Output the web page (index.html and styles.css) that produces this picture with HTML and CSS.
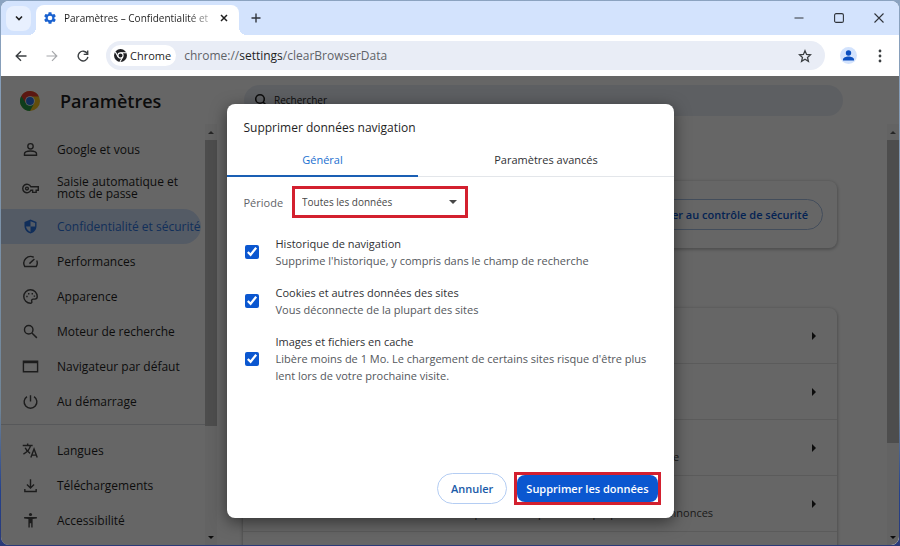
FILE: index.html
```html
<!DOCTYPE html>
<html lang="fr">
<head>
    <meta charset="UTF-8">
    <meta name="viewport" content="width=device-width, initial-scale=1.0">
    <title>Paramètres – Confidentialité et sécurité</title>
    <link rel="stylesheet" href="styles.css">
</head>
<body>
<div class="window">

    <!-- Onglets -->
    <header class="tabstrip">
        <button class="tab-search" aria-label="Rechercher dans les onglets">
            <svg width="10" height="10" viewBox="0 0 10 10"><path d="M2 3.5l3 3 3-3" fill="none" stroke="#1f1f1f" stroke-width="1.6"/></svg>
        </button>
        <div class="tab">
            <svg class="gear" width="14" height="14" viewBox="0 0 24 24"><path fill="#1a62d0" d="M19.4 13c0-.3.1-.6.1-1s0-.7-.1-1l2.200-1.700c.2-.2.2-.4.1-.6l-2-3.500c-.1-.2-.4-.3-.6-.2l-2.500 1c-.5-.4-1.100-.7-1.700-1l-.4-2.600c0-.2-.2-.4-.5-.4h-4c-.2 0-.5.2-.5.4l-.4 2.600c-.6.3-1.200.6-1.700 1l-2.500-1c-.2-.1-.5 0-.6.2l-2 3.500c-.1.2-.1.5.1.6L4.600 11c0 .3-.1.6-.1 1s0 .7.1 1l-2.200 1.700c-.2.2-.2.4-.1.6l2 3.500c.1.2.4.3.6.2l2.500-1c.5.4 1.100.7 1.700 1l.4 2.600c0 .2.2.4.5.4h4c.2 0 .5-.2.5-.4l.4-2.600c.6-.3 1.200-.6 1.700-1l2.500 1c.2.1.5 0 .6-.2l2-3.500c.1-.2.1-.5-.1-.6L19.400 13zM12 16a4 4 0 1 1 0-8 4 4 0 0 1 0 8z"/></svg>
            <span class="tab-title">Paramètres – Confidentialité et</span>
            <button aria-label="Fermer l'onglet">
                <svg width="10" height="10" viewBox="0 0 10 10"><path d="M2 2l6 6M8 2l-6 6" stroke="#1f1f1f" stroke-width="1.5"/></svg>
            </button>
        </div>
        <button class="new-tab" aria-label="Nouvel onglet">
            <svg width="10" height="10" viewBox="0 0 10 10"><path d="M5 .5v9M.5 5h9" stroke="#30343b" stroke-width="1.4"/></svg>
        </button>
        <div class="controls">
            <button aria-label="Réduire"><svg width="10" height="10" viewBox="0 0 10 10"><path d="M.5 5h9" stroke="#30343b"/></svg></button>
            <button aria-label="Agrandir"><svg width="10" height="10" viewBox="0 0 10 10"><rect x=".6" y=".6" width="8.800" height="8.800" rx="1.500" fill="none" stroke="#30343b" stroke-width="1.100"/></svg></button>
            <button aria-label="Fermer"><svg width="10" height="10" viewBox="0 0 10 10"><path d="M.5.5l9 9M9.500.5l-9 9" stroke="#30343b" stroke-width="1.100"/></svg></button>
        </div>
    </header>

    <!-- Barre d'adresse -->
    <div class="toolbar">
        <button class="nav-btn" aria-label="Retour"><svg width="12" height="12" viewBox="0 0 12 12"><path d="M11.500 6H1.500M6 1.200L1.200 6 6 10.800" fill="none" stroke="#3c4043" stroke-width="1.400"/></svg></button>
        <button class="nav-btn" aria-label="Avancer"><svg width="12" height="12" viewBox="0 0 12 12"><path d="M.5 6h10M6 1.200L10.800 6 6 10.800" fill="none" stroke="#a6a8ab" stroke-width="1.200"/></svg></button>
        <button class="nav-btn" aria-label="Actualiser"><svg width="12" height="12" viewBox="0 0 12 12"><path d="M10.300 3.600A4.900 4.900 0 1 0 10.900 6.800" fill="none" stroke="#3c4043" stroke-width="1.400"/><path d="M10.700.4v4H6.700" fill="none" stroke="#3c4043" stroke-width="1.400"/></svg></button>
        <div class="omnibox">
            <button class="chip">
                <svg width="13" height="13" viewBox="0 0 24 24"><circle cx="12" cy="12" r="12" fill="#202124"/><circle cx="12" cy="12" r="4.800" fill="none" stroke="#fff" stroke-width="2"/><path d="M12 7h11M7.700 14.500L2.300 5.200M16.300 14.500L11 23.700" stroke="#fff" stroke-width="2"/></svg>
                Chrome
            </button>
            <span class="url">chrome://<b>settings</b>/clearBrowserData</span>
            <button class="star" aria-label="Ajouter aux favoris"><svg width="14" height="14" viewBox="0 0 24 24"><path d="M12 3l2.700 6.300 6.800.6-5.200 4.500 1.600 6.700L12 17.500l-5.900 3.600 1.600-6.700-5.200-4.500 6.800-.6z" fill="none" stroke="#3c4043" stroke-width="2.200"/></svg></button>
        </div>
        <button class="avatar" aria-label="Profil"><svg width="17" height="17" viewBox="0 0 17 17"><circle cx="8.500" cy="8.500" r="8.500" fill="#d3e3fd"/><circle cx="8.500" cy="6" r="2.700" fill="#0b4fc0"/><path d="M3 13.500v-1c0-2 3-3 5.500-3s5.500 1 5.500 3v1z" fill="#0b4fc0"/></svg></button>
        <button class="menu" aria-label="Menu"><svg width="4" height="14" viewBox="0 0 4 14"><g fill="#3c4043"><circle cx="2" cy="2" r="1.400"/><circle cx="2" cy="7" r="1.400"/><circle cx="2" cy="12" r="1.400"/></g></svg></button>
    </div>

    <div class="content">
        <div class="page">
            <div class="topbar">
                <div class="brand">
                    <svg width="20" height="20" viewBox="0 0 48 48"><circle cx="24" cy="24" r="24" fill="#f2c01d"/><path d="M24 24L3.200 12A24 24 0 0 0 24 48l10-18z" fill="#249a48"/><path d="M24 13h21.300A24 24 0 0 0 3.200 12l11.200 17.500z" fill="#e33b2e"/><circle cx="24" cy="24" r="11.500" fill="#fff"/><circle cx="24" cy="24" r="9.500" fill="#2a70e0"/></svg>
                    <h1>Paramètres</h1>
                </div>
                <div class="search">
                    <svg width="14" height="14" viewBox="0 0 14 14"><path d="M9 9l4 4" stroke="#1f1f1f" stroke-width="1.600"/><circle cx="6" cy="6" r="4.300" fill="none" stroke="#1f1f1f" stroke-width="1.600"/></svg>
                    <input type="search" placeholder="Rechercher" aria-label="Rechercher">
                </div>
            </div>

            <div class="columns">
                <nav class="sidebar">
                    <a href="#"><svg viewBox="0 0 24 24"><circle cx="12" cy="7.500" r="3.800"/><path d="M3.500 20v-2c0-3 5.500-4 8.500-4s8.500 1 8.500 4v2z"/></svg>Google et vous</a>
                    <a href="#" class="tall"><svg viewBox="0 0 24 24"><path d="M12.500 9.500a6 6 0 1 0 0 5H15v3h5v-3h3v-5z"/><circle cx="7" cy="12" r="2"/></svg>Saisie automatique et mots de passe</a>
                    <a href="#" class="active"><svg viewBox="0 0 24 24"><path d="M12 2L3.500 5.500V11c0 5.500 3.500 9.500 8.500 11 5-1.500 8.500-5.500 8.500-11V5.500z"/><path class="light" d="M12 4.500L18.500 7.200V12H12zM12 12v7.800C8.800 18.500 6.200 15.500 5.600 12z"/></svg>Confidentialité et sécurité</a>
                    <a href="#"><svg viewBox="0 0 24 24"><path d="M16.500 6A9.500 9.500 0 0 0 3.800 19h16.400a9.500 9.500 0 0 0 .6-8.500"/><path d="M10.500 15l7-6.500"/></svg>Performances</a>
                    <a href="#"><svg viewBox="0 0 24 24"><path d="M12 2.500a9.500 9.500 0 0 0 0 19c1.500 0 2.300-1.200 1.800-2.500-.8-1.800.2-3.300 2-3.300h2.200c2 0 3.500-1.600 3.500-3.700 0-5.500-4.300-9.500-9.500-9.500z"/><path d="M6 12h2M8.500 8h2M13.500 8h2M16.500 11.500h2"/></svg>Apparence</a>
                    <a href="#"><svg viewBox="0 0 24 24"><circle cx="9.500" cy="9.500" r="6"/><path d="M14 14l7 7"/></svg>Moteur de recherche</a>
                    <a href="#"><svg viewBox="0 0 24 24"><path d="M2 4.500h20v15H2zM2 6.500h20"/></svg>Navigateur par défaut</a>
                    <a href="#"><svg viewBox="0 0 24 24"><path d="M12 3v9M7 5a9 9 0 1 0 10 0"/></svg>Au démarrage</a>
                    <hr>
                    <a href="#"><svg viewBox="0 0 24 24"><path d="M1 5h14M8 2v3M12 5c-1 5-5 9-10 12M4.500 8c1.500 4 4 6 7 8M12.500 22l4.500-12 4.500 12M14 18.500h6"/></svg>Langues</a>
                    <a href="#"><svg viewBox="0 0 24 24"><path d="M12 3v12M7 10.500l5 5 5-5M4 17v3.500h16V17"/></svg>Téléchargements</a>
                    <a href="#"><svg viewBox="0 0 24 24"><path class="solid" d="M3 7h18v2l-6 1v12h-2v-6h-2v6H9V10L3 9z"/><circle class="solid" cx="12" cy="3.500" r="2.200"/></svg>Accessibilité</a>
                </nav>
                <div class="scrollbar">
                    <span class="arrow up"></span>
                    <span class="thumb side-thumb"></span>
                    <span class="arrow down"></span>
                </div>

                <main class="main">
                    <section class="card check">
                        <button class="outline">Procéder au contrôle de sécurité</button>
                    </section>
                    <section class="card list">
                        <a href="#" class="row" aria-label="Supprimer les données de navigation"><i></i></a>
                        <a href="#" class="row" aria-label="Guide relatif à la confidentialité"><i></i></a>
                        <a href="#" class="row" aria-label="Cookies tiers"><span>Les cookies tiers sont bloqués lors de la consultation en mode navigation privée</span><i></i></a>
                        <a href="#" class="row" aria-label="Confidentialité et annonces"><span>Personnaliser les informations utilisées par les sites pour vous proposer des annonces</span><i></i></a>
                        <a href="#" class="row" aria-label="Sécurité"></a>
                    </section>
                </main>
                <div class="scrollbar">
                    <span class="arrow up"></span>
                    <span class="thumb main-thumb"></span>
                    <span class="arrow down"></span>
                </div>
            </div>
        </div>

        <!-- Boîte de dialogue -->
        <div class="backdrop">
            <div class="dialog" role="dialog" aria-labelledby="dialogTitle">
                <h2 id="dialogTitle">Supprimer données navigation</h2>
                <div class="tabs" role="tablist">
                    <button role="tab" class="selected">Général</button>
                    <button role="tab">Paramètres avancés</button>
                </div>
                <div class="period">
                    <label for="period">Période</label>
                    <div class="highlight">
                        <select id="period">
                            <option>Toutes les données</option>
                        </select>
                    </div>
                </div>
                <div class="options">
                    <label class="option">
                        <input type="checkbox" checked>
                        <span><strong>Historique de navigation</strong>Supprime l'historique, y compris dans le champ de recherche</span>
                    </label>
                    <label class="option">
                        <input type="checkbox" checked>
                        <span><strong>Cookies et autres données des sites</strong>Vous déconnecte de la plupart des sites</span>
                    </label>
                    <label class="option">
                        <input type="checkbox" checked>
                        <span><strong>Images et fichiers en cache</strong>Libère moins de 1 Mo. Le chargement de certains sites risque d'être plus lent lors de votre prochaine visite.</span>
                    </label>
                </div>
                <div class="actions">
                    <button class="cancel">Annuler</button>
                    <div class="highlight">
                        <button class="confirm">Supprimer les données</button>
                    </div>
                </div>
            </div>
        </div>
    </div>
</div>
</body>
</html>
```
FILE: styles.css
```css
* {
    box-sizing: border-box;
}
body {
    margin: 0;
    padding: 1px;
    height: 100vh;
    background: linear-gradient(#8ba3c0 0, #6f8496 75%, #24418c 90%, #2a3a78 100%);
    font-family: "Open Sans", "Noto Sans", sans-serif;
    font-size: 12px;
    color: #1f1f1f;
}
button {
    display: flex;
    align-items: center;
    justify-content: center;
    padding: 0;
    border: 0;
    background: none;
    font: inherit;
    color: inherit;
}
svg {
    flex: none;
}
.window {
    display: flex;
    flex-direction: column;
    height: 100%;
    border-radius: 8px;
    overflow: hidden;
    background: #fff;
}

/* Onglets */
.tabstrip {
    display: flex;
    align-items: center;
    height: 34px;
    flex: none;
    padding-left: 5px;
    background: #d3e3fd;
}
.tab-search {
    width: 25px;
    height: 25px;
    border-radius: 8px;
    background: #e8f0fe;
}
.tab {
    position: relative;
    display: flex;
    align-items: center;
    align-self: flex-end;
    width: 203px;
    height: 30px;
    margin-left: 5px;
    padding: 0 10px 4px 7px;
    border-radius: 8px 8px 0 0;
    background: #fff;
}
.tab::before, .tab::after {
    content: "";
    position: absolute;
    bottom: 0;
    width: 8px;
    height: 8px;
}
.tab::before {
    left: -8px;
    background: radial-gradient(circle at 0 0, transparent 8px, #fff 8px);
}
.tab::after {
    right: -8px;
    background: radial-gradient(circle at 100% 0, transparent 8px, #fff 8px);
}
.tab-title {
    flex: 1;
    margin-left: 7px;
    white-space: nowrap;
    font-size: 10px;
    -webkit-mask-image: linear-gradient(90deg, #000 80%, transparent);
    mask-image: linear-gradient(90deg, #000 80%, transparent);
}
.new-tab {
    width: 24px;
    margin-left: 5px;
}
.controls {
    display: flex;
    margin-left: auto;
}
.controls button {
    width: 40px;
    height: 30px;
}

/* Barre d'adresse */
.toolbar {
    display: flex;
    align-items: center;
    height: 41px;
    flex: none;
    padding: 0 14px 0 4px;
    background: #fff;
}
.nav-btn {
    width: 31px;
    height: 28px;
}
.omnibox {
    display: flex;
    align-items: center;
    flex: 1;
    height: 29px;
    margin: 0 15px 0 8px;
    padding: 0 13px 0 4px;
    border-radius: 15px;
    background: #e9edf6;
}
.chip {
    gap: 3px;
    height: 21px;
    padding: 0 5px 0 4px;
    border-radius: 11px;
    background: #fff;
    font-size: 11px;
    font-weight: 500;
}
.url {
    flex: 1;
    margin-left: 8px;
    font-size: 12px;
    color: #5f6368;
}
.url b {
    font-weight: 400;
    color: #1f1f1f;
}
.menu {
    width: 10px;
    margin-left: 18px;
}

/* Page des paramètres */
.content {
    position: relative;
    flex: 1;
    min-height: 0;
}
.page {
    display: flex;
    flex-direction: column;
    height: 100%;
    overflow: hidden;
}
.topbar {
    display: flex;
    align-items: center;
    height: 48px;
    flex: none;
    padding-right: 56px;
}
.brand {
    display: flex;
    align-items: center;
    gap: 20px;
    width: 243px;
    padding: 2px 0 0 19px;
}
.brand h1 {
    margin: 0;
    font-size: 18px;
    font-weight: 600;
}
.search {
    display: flex;
    align-items: center;
    flex: 1;
    gap: 6px;
    height: 31px;
    padding-left: 10px;
    border-radius: 16px;
    background: #e9eef6;
}
.search input {
    flex: 1;
    border: 0;
    padding: 0;
    outline: 0;
    background: none;
    font: inherit;
    font-size: 10px;
}
.search input::placeholder {
    color: #1f1f1f;
}
.columns {
    display: flex;
    flex: 1;
    min-height: 0;
}
.sidebar {
    width: 204px;
    flex: none;
    padding-top: 8px;
}
.sidebar a {
    display: flex;
    align-items: center;
    gap: 18px;
    width: 200px;
    height: 35px;
    padding-left: 21px;
    border-radius: 0 18px 18px 0;
    color: #1f1f1f;
    font-size: 12px;
    font-weight: 500;
    line-height: 12px;
    text-decoration: none;
}
.sidebar .tall {
    height: 42px;
    padding-right: 10px;
}
.sidebar svg {
    width: 17px;
    height: 17px;
    fill: none;
    stroke: #474747;
    stroke-width: 2;
}
.sidebar .solid {
    fill: #474747;
    stroke: none;
}
.sidebar .active {
    background: #d3e3fd;
    color: #2f77e0;
    white-space: nowrap;
}
.sidebar .active svg {
    fill: #2a74e0;
    stroke: none;
}
.sidebar .active .light {
    fill: #d3e3fd;
}
.sidebar hr {
    height: 1px;
    margin: 5px 0 8px;
    border: 0;
    background: #dadce0;
}
.scrollbar {
    display: flex;
    flex-direction: column;
    align-items: center;
    width: 12px;
    flex: none;
    background: #f8f8f8;
}
.arrow {
    display: flex;
    align-items: center;
    justify-content: center;
    height: 16px;
}
.arrow::before {
    content: "";
    border: 3px solid transparent;
}
.up::before {
    border-top: 0;
    border-bottom-color: #606060;
}
.down {
    margin-top: auto;
}
.down::before {
    border-bottom: 0;
    border-top-color: #202020;
}
.thumb {
    width: 12px;
    background: #c1c1c1;
}
.side-thumb {
    height: 68%;
}
.main-thumb {
    height: 72%;
}
.main {
    flex: 1;
    min-width: 0;
    padding: 57px 50px 0 26px;
}
.card {
    border-radius: 8px;
    box-shadow: 0 1px 3px 1px rgba(60, 64, 67, .3);
}
.check {
    display: flex;
    align-items: center;
    justify-content: flex-end;
    height: 67px;
    padding-right: 14px;
}
.outline {
    height: 31px;
    padding: 0 14px;
    border: 1px solid #a8c0e4;
    border-radius: 16px;
    color: #0b57d0;
    font-size: 11px;
    font-weight: 600;
}
.list {
    margin-top: 60px;
}
.row {
    display: flex;
    align-items: center;
    height: 56px;
    padding: 0 21px 0 28px;
    border-bottom: 1px solid #e3e3e3;
    color: #474747;
    font-size: 11px;
    line-height: 17px;
    text-decoration: none;
    white-space: nowrap;
}
.row span {
    padding-top: 17px;
}
.row i {
    margin-left: auto;
    border: 4px solid transparent;
    border-left-color: #1f1f1f;
    border-right: 0;
}

/* Boîte de dialogue */
.backdrop {
    position: absolute;
    inset: 0;
    display: flex;
    align-items: center;
    justify-content: center;
    padding: 28px 27px 27px;
    background: rgba(0, 0, 0, .6);
}
.dialog {
    display: flex;
    flex-direction: column;
    width: 50%;
    min-width: 447px;
    height: 100%;
    border-radius: 8px;
    background: #fff;
    box-shadow: 0 4px 16px rgba(0, 0, 0, .5);
}
.dialog h2 {
    margin: 0;
    padding: 14px 17px 12px;
    font-size: 12px;
    font-weight: 400;
    line-height: 20px;
}
.tabs {
    display: flex;
    border-bottom: 1px solid #e3e6ea;
}
.tabs button {
    flex: 1 1 auto;
    height: 27px;
    padding-bottom: 6px;
    border-bottom: 2px solid transparent;
    margin-bottom: -1px;
    font-size: 11px;
    font-weight: 500;
    color: #303134;
}
.tabs .selected {
    border-bottom-color: #1a5fb4;
    color: #1a6fd0;
}
.period {
    display: flex;
    align-items: center;
    gap: 9px;
    padding: 9px 17px 0;
    font-size: 11px;
    color: #5f6368;
}
.highlight {
    border: 3px solid #d3202f;
}
.period .highlight {
    position: relative;
}
.period .highlight::after {
    content: "";
    position: absolute;
    top: 11px;
    right: 8px;
    border: 4px solid transparent;
    border-top-color: #474747;
    border-bottom: 0;
    pointer-events: none;
}
.period select {
    display: block;
    width: 170px;
    height: 26px;
    padding: 0 7px;
    border: 0;
    appearance: none;
    background: #fff;
    color: #474747;
    font: inherit;
    font-size: 10px;
}
.options {
    display: flex;
    flex-direction: column;
    gap: 15px;
    padding: 17px 17px 0 18px;
}
.option {
    display: flex;
    align-items: center;
    gap: 17px;
    font-size: 11px;
    line-height: 17px;
    color: #54575c;
}
.option strong {
    display: block;
    font-weight: 400;
    color: #303134;
}
.option input {
    flex: none;
    width: 14px;
    height: 14px;
    margin: 0;
    accent-color: #0b57d0;
}
.actions {
    display: flex;
    align-items: center;
    justify-content: flex-end;
    gap: 7px;
    margin-top: auto;
    padding: 0 13px 13px;
    font-size: 11px;
    font-weight: 600;
}
.cancel {
    height: 31px;
    padding: 0 13px;
    border: 1px solid #b4cdf3;
    border-radius: 16px;
    color: #1a5aa8;
}
.confirm {
    height: 27px;
    padding: 0 9px;
    border-radius: 8px;
    background: #0b57d0;
    color: #fff;
}
```
